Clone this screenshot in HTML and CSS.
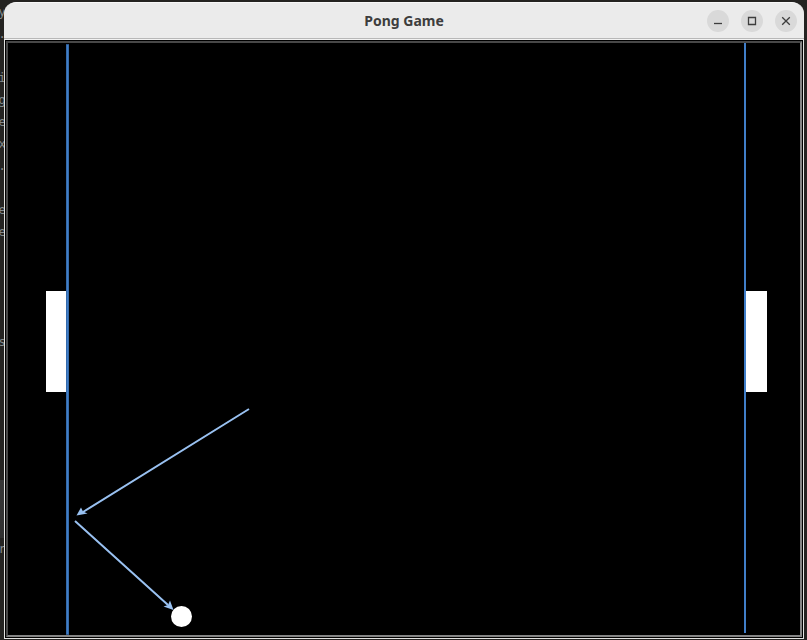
FILE: index.html
```html
<!DOCTYPE html>
<html lang="en">
<head>
<meta charset="utf-8">
<title>Pong Game</title>
<link rel="stylesheet" href="styles.css">
</head>
<body>
<div class="desktop">
  <div class="terminal" aria-hidden="true">
    <pre class="terminal-text">y
.

i
g
e
x
.

e
e




s</pre>
    <pre class="terminal-status">r</pre>
  </div>
  <main class="window">
    <header class="titlebar">
      <h1 class="title">Pong Game</h1>
      <div class="controls">
        <button class="control" type="button" aria-label="Minimize">
          <svg viewBox="0 0 22 22"><path d="M7 13.5H15"/></svg>
        </button>
        <button class="control" type="button" aria-label="Maximize">
          <svg viewBox="0 0 22 22"><path d="M7.5 7.5H14.5V14.5H7.5Z"/></svg>
        </button>
        <button class="control" type="button" aria-label="Close">
          <svg viewBox="0 0 22 22"><path d="M7.2 7.2L14.8 14.8M14.8 7.2L7.2 14.8"/></svg>
        </button>
      </div>
    </header>
    <div class="frame">
      <svg class="court" viewBox="0 0 792 592" role="img" aria-label="Pong court">
        <rect class="piece" x="38" y="248" width="21" height="101"/>
        <rect class="piece" x="738" y="248" width="21" height="101"/>
        <path class="limit-edge" d="M59.5 1V592"/>
        <path class="limit" d="M59.500 2V591M737 0V590"/>
        <circle class="piece" cx="173.500" cy="573.500" r="10.500"/>
        <path class="path" d="M241 366L75 469M67 478L160 562"/>
        <path class="head" d="M68.500 472.500L73 464.500L75 468.500L79.500 470.500Z"/>
        <path class="head" d="M165.500 567L155.500 563.500L160 562L162 557.500Z"/>
      </svg>
    </div>
  </main>
</div>
</body>
</html>
```
FILE: styles.css
```css
* {
  box-sizing: border-box;
}

body {
  margin: 0;
  background: #242321;
}

.desktop {
  display: grid;
  grid-template-columns: 4px minmax(0, 1fr) 3px;
  min-height: 100vh;
}

.terminal {
  display: flex;
  flex-direction: column;
  justify-content: space-between;
  align-items: center;
  overflow: hidden;
  padding: 1px 0 80px;
  background: linear-gradient(#242321 75%, #373737 75%, #303030 84%, #242321 84%);
  color: #858b8d;
  font: 12px/22px "DejaVu Sans Mono", monospace;
}

.terminal-text,
.terminal-status {
  margin: 0;
  font: inherit;
}

.window {
  display: flex;
  flex-direction: column;
  padding: 2px 0 1px;
}

.titlebar {
  display: grid;
  grid-template-columns: 1fr auto 1fr;
  align-items: center;
  height: 38px;
  padding: 0 7px 1px;
  border-top: 1px solid #f8f8f8;
  border-bottom: 1px solid #f2f2f2;
  border-radius: 12px 12px 0 0;
  background: #ebebeb;
  box-shadow: inset 0 -1px #b8b8b8;
}

.title {
  grid-column: 2;
  margin: 0;
  color: #3d3d3d;
  font: bold 14px/20px "Noto Sans", sans-serif;
}

.controls {
  display: flex;
  justify-content: flex-end;
  gap: 12px;
}

.control {
  width: 22px;
  height: 22px;
  padding: 0;
  border: 0;
  border-radius: 50%;
  background: #d9d9d9;
}

.control svg {
  display: block;
  fill: none;
  stroke: #3d3d3d;
  stroke-width: 1.3;
}

.frame {
  display: flex;
  flex: 1;
  padding: 1px;
  border: 1px solid #e2e2e0;
  border-top: 0;
  background: #000;
}

.court {
  display: block;
  flex: 1;
  min-width: 0;
  border: 2px solid;
  border-color: #484848 #858585 #858585 #484848;
}

.piece {
  fill: #fff;
}

.limit {
  fill: none;
  stroke: #407ec9;
  stroke-width: 2;
}

.limit-edge {
  stroke: #2b568a;
  stroke-width: 3;
}

.path {
  fill: none;
  stroke: #99c1f1;
  stroke-width: 2;
}

.head {
  fill: #99c1f1;
}
```
